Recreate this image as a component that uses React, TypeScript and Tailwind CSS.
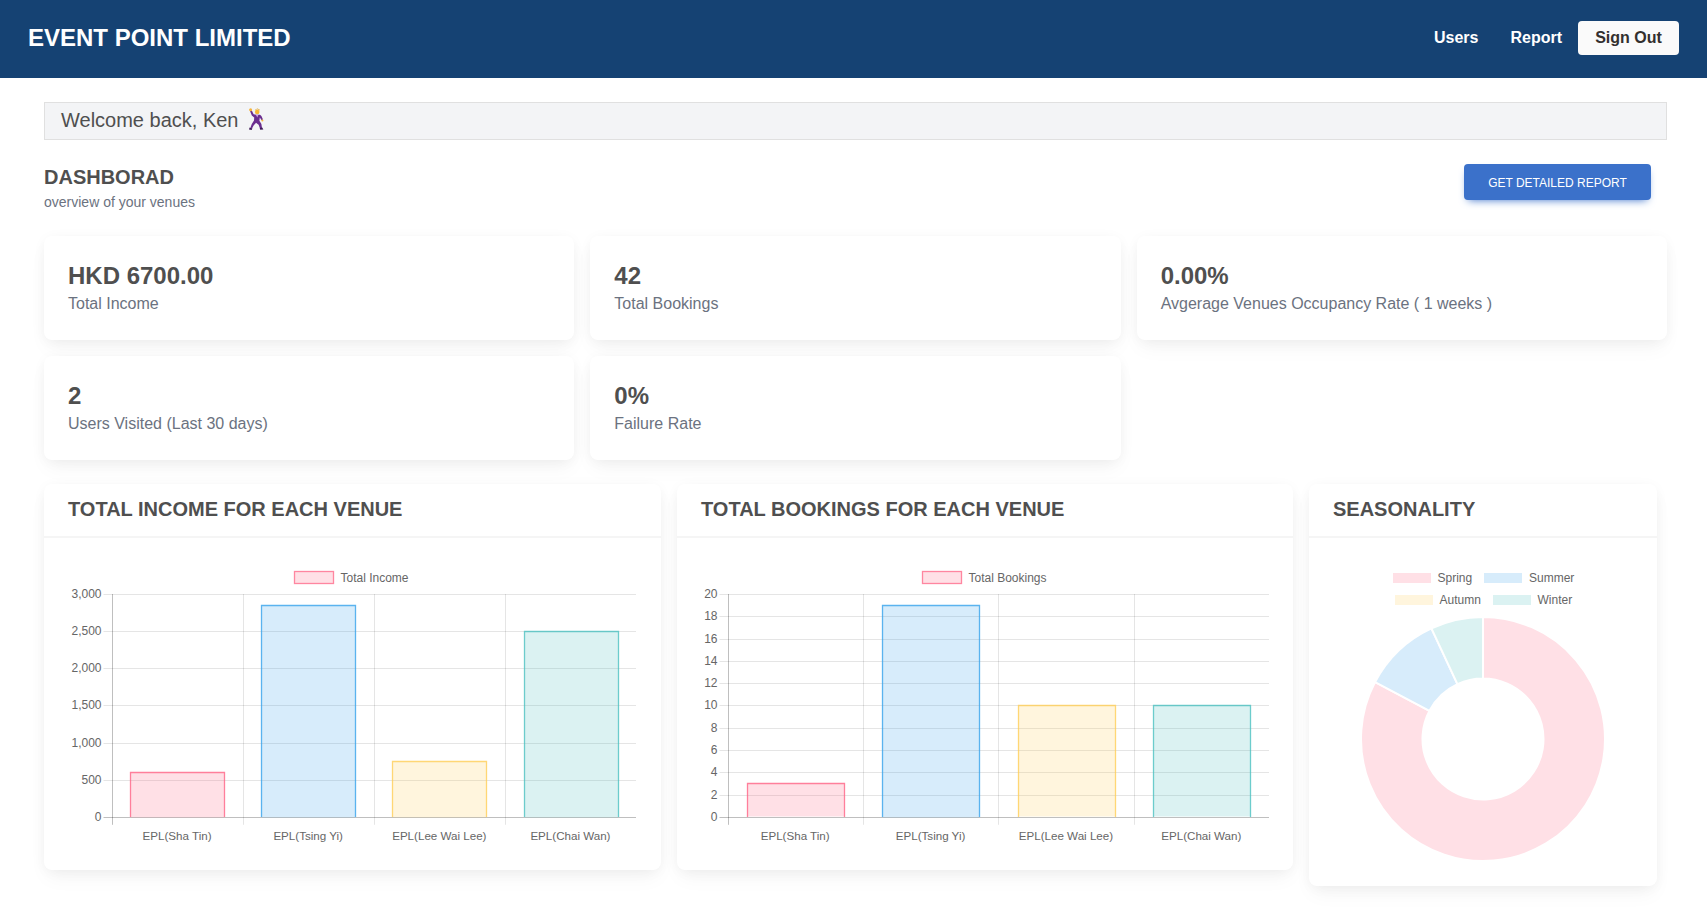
import React from "react";

const COLORS = [
  { fill: "rgba(255,99,132,0.2)", stroke: "rgb(255,99,132)" },
  { fill: "rgba(54,162,235,0.2)", stroke: "rgb(54,162,235)" },
  { fill: "rgba(255,206,86,0.2)", stroke: "rgb(255,206,86)" },
  { fill: "rgba(75,192,192,0.2)", stroke: "rgb(75,192,192)" },
];

const VENUES = ["EPL(Sha Tin)", "EPL(Tsing Yi)", "EPL(Lee Wai Lee)", "EPL(Chai Wan)"];

const stats = [
  { value: "HKD 6700.00", label: "Total Income" },
  { value: "42", label: "Total Bookings" },
  { value: "0.00%", label: "Avgerage Venues Occupancy Rate ( 1 weeks )" },
  { value: "2", label: "Users Visited (Last 30 days)" },
  { value: "0%", label: "Failure Rate" },
];

const cardShadow = "shadow-[0_2px_15px_-3px_rgba(0,0,0,0.07),0_10px_20px_-2px_rgba(0,0,0,0.04)]";

// small dancing man, there is no colour emoji font here
const Dancer = () => (
  <svg width="16" height="22" viewBox="0 0 16 22" className="inline-block ml-[9px] -mt-[2px]">
    <path d="M2 3 L3.8 2.6 L5.6 6.2 L8 6.8 L12 6.8 L13.4 8 L15 11.6 L13.6 12.2 L11.8 9.6 L11.4 12.8 L13.4 16 L14 20 L12 20.4 L10.6 16.8 L8 14.8 L5.6 17.6 L4 20.6 L2.4 19.8 L3.8 16 L6 12.4 L6.2 9.4 L3.8 7.6 Z" fill="#6a2d8f" />
    <path d="M7.6 6.8 L10.4 6.8 L9.4 9.6 Z" fill="#c9a0dc" />
    <circle cx="2.6" cy="1.8" r="1.5" fill="#f5b53d" />
    <circle cx="9.2" cy="4" r="2.3" fill="#f7b733" />
    <path d="M6.8 3.2 A2.5 2.5 0 0 1 11.6 2.8 L11.6 1.4 L9.4 0.6 L7.2 1.4 Z" fill="#e2a21f" />
    <circle cx="14.4" cy="12.6" r="1" fill="#f5b53d" />
    <path d="M1.6 19.4 L4.4 20.6 L3.6 22 L1 21.4 Z" fill="#3d1a57" />
    <path d="M11.8 20 L14.2 19.6 L15.4 21.6 L12.2 21.8 Z" fill="#3d1a57" />
  </svg>
);

type BarChartProps = {
  legend: string;
  legendBox: number;
  values: number[];
  max: number;
  step: number;
  left: number;
};

const BarChart = ({ legend, legendBox, values, max, step, left }: BarChartProps) => {
  const top = 32;
  const bottom = 254.8;
  const right = 568;
  const cell = (right - left) / values.length;
  const ticks: number[] = [];
  for (let v = 0; v <= max; v += step) ticks.push(v);
  const y = (v: number) => bottom - (v / max) * (bottom - top);

  return (
    <svg width="568" height="284" className="block">
      <rect x={legendBox + 0.5} y="9.5" width="39" height="12" fill={COLORS[0].fill} stroke="rgba(255,99,132,0.75)" strokeWidth="1.3" />
      <text x={legendBox + 46.5} y="20" fontSize="12" fill="#666">{legend}</text>

      {ticks.map((t) => (
        <g key={t}>
          <line
            x1={left - 8}
            x2={right}
            y1={Math.round(y(t)) + 0.5}
            y2={Math.round(y(t)) + 0.5}
            stroke={t === 0 ? "rgba(0,0,0,0.25)" : "rgba(0,0,0,0.1)"}
          />
          <text x={left - 10} y={y(t) + 4} textAnchor="end" fontSize="12" fill="#666">
            {t.toLocaleString("en-US")}
          </text>
        </g>
      ))}

      {[0, 1, 2, 3].map((i) => (
        <line
          key={i}
          x1={Math.round(left + cell * i) + 0.5}
          x2={Math.round(left + cell * i) + 0.5}
          y1={top}
          y2={bottom + 8}
          stroke={i === 0 ? "rgba(0,0,0,0.25)" : "rgba(0,0,0,0.1)"}
        />
      ))}

      {values.map((v, i) => {
        const w = cell * 0.715;
        const x = left + cell * i + (cell - w) / 2;
        return (
          <g key={VENUES[i]}>
            <rect x={Math.round(x) + 0.5} y={Math.round(y(v)) + 0.5} width={Math.round(w)} height={Math.round(bottom - y(v))} fill={COLORS[i].fill} />
            <path
              d={`M${Math.round(x) + 0.5} ${Math.round(bottom)} V${Math.round(y(v)) + 0.5} H${Math.round(x) + Math.round(w) + 0.5} V${Math.round(bottom)}`}
              fill="none"
              stroke={COLORS[i].stroke}
              strokeOpacity="0.8"
              strokeWidth="1.3"
            />
            <text x={left + cell * i + cell / 2} y="278" textAnchor="middle" fontSize="11.6" fill="#666">
              {VENUES[i]}
            </text>
          </g>
        );
      })}
    </svg>
  );
};

const polar = (r: number, deg: number) => {
  const a = ((deg - 90) * Math.PI) / 180;
  return [150 + r * Math.cos(a), 177 + r * Math.sin(a)];
};

const slice = (from: number, to: number) => {
  const R = 122;
  const r = 60.5;
  const [x1, y1] = polar(R, from);
  const [x2, y2] = polar(R, to);
  const [x3, y3] = polar(r, to);
  const [x4, y4] = polar(r, from);
  const large = to - from > 180 ? 1 : 0;
  return `M${x1} ${y1} A${R} ${R} 0 ${large} 1 ${x2} ${y2} L${x3} ${y3} A${r} ${r} 0 ${large} 0 ${x4} ${y4} Z`;
};

const DonutChart = () => {
  const legend = [
    { name: "Spring", x: 60, y: 11, c: 0, gap: 44.5 },
    { name: "Summer", x: 151, y: 11, c: 1, gap: 45 },
    { name: "Autumn", x: 62, y: 33, c: 2, gap: 44.5 },
    { name: "Winter", x: 160, y: 33, c: 3, gap: 44.5 },
  ];
  return (
    <svg width="300" height="300" className="block">
      {legend.map((l) => (
        <g key={l.name}>
          <rect x={l.x} y={l.y} width="38" height="10" fill={COLORS[l.c].fill} />
          <text x={l.x + l.gap} y={l.y + 9} fontSize="12" fill="#666">{l.name}</text>
        </g>
      ))}
      <path d={slice(0, 297.8)} fill={COLORS[0].fill} stroke="#fff" strokeWidth="2" />
      <path d={slice(297.8, 335)} fill={COLORS[1].fill} stroke="#fff" strokeWidth="2" />
      <path d={slice(335, 360)} fill={COLORS[3].fill} stroke="#fff" strokeWidth="2" />
    </svg>
  );
};

const ChartCard = ({ title, width, children }: { title: string; width: string; children: React.ReactNode }) => (
  <div className={`${width} bg-white rounded-lg ${cardShadow}`}>
    <div className="px-6 pt-[11px] pb-[13px] border-b-2 border-[#f5f5f5]">
      <h3 className="text-xl leading-7 font-bold text-[#4f4f4f]">{title}</h3>
    </div>
    <div className="p-6">{children}</div>
  </div>
);

export default function App() {
  return (
    <div className="min-h-[909px] bg-white font-['Liberation_Sans',sans-serif] text-[#4f4f4f]">
      <nav className="h-[78px] pb-0.5 bg-[#154273] flex items-center justify-between px-7">
        <span className="text-2xl font-bold text-white">EVENT POINT LIMITED</span>
        <div className="flex items-center font-bold text-white">
          <a className="mr-8">Users</a>
          <a className="mr-4">Report</a>
          <button className="w-[101px] h-[34px] bg-[#fafafa] text-[#332f2e] rounded font-bold">Sign Out</button>
        </div>
      </nav>

      <main className="pl-11 pr-10 pt-6 pb-6">
        <div className="h-[38px] pb-0.5 flex items-center bg-[#f3f4f6] border border-[#e0e0e0] px-4 text-xl">
          Welcome back, Ken
          <Dancer />
        </div>

        <div className="mt-[23px] flex items-start justify-between">
          <div>
            <h2 className="text-xl leading-7 font-bold">DASHBORAD</h2>
            <p className="mt-px text-sm text-[#6b7280]">overview of your venues</p>
          </div>
          <button className="mt-px mr-4 w-[187px] h-9 pt-0.5 rounded bg-[#3b71ca] text-white text-xs uppercase shadow-[0_4px_9px_-4px_#3b71ca]">
            Get detailed report
          </button>
        </div>

        <div className="mt-6 grid grid-cols-3 gap-4">
          {stats.map((s) => (
            <div key={s.label} className={`bg-white rounded-lg p-6 ${cardShadow}`}>
              <div className="text-2xl font-bold">{s.value}</div>
              <div className="text-base text-[#6b7280]">{s.label}</div>
            </div>
          ))}
        </div>

        <div className="mt-6 flex items-start gap-4">
          <ChartCard title="TOTAL INCOME FOR EACH VENUE" width="w-[617px]">
            <BarChart legend="Total Income" legendBox={226} values={[600, 2850, 750, 2500]} max={3000} step={500} left={43.5} />
          </ChartCard>
          <ChartCard title="TOTAL BOOKINGS FOR EACH VENUE" width="w-[616px]">
            <BarChart legend="Total Bookings" legendBox={221} values={[3, 19, 10, 10]} max={20} step={2} left={26.5} />
          </ChartCard>
          <ChartCard title="SEASONALITY" width="w-[348px]">
            <DonutChart />
          </ChartCard>
        </div>
      </main>
    </div>
  );
}
